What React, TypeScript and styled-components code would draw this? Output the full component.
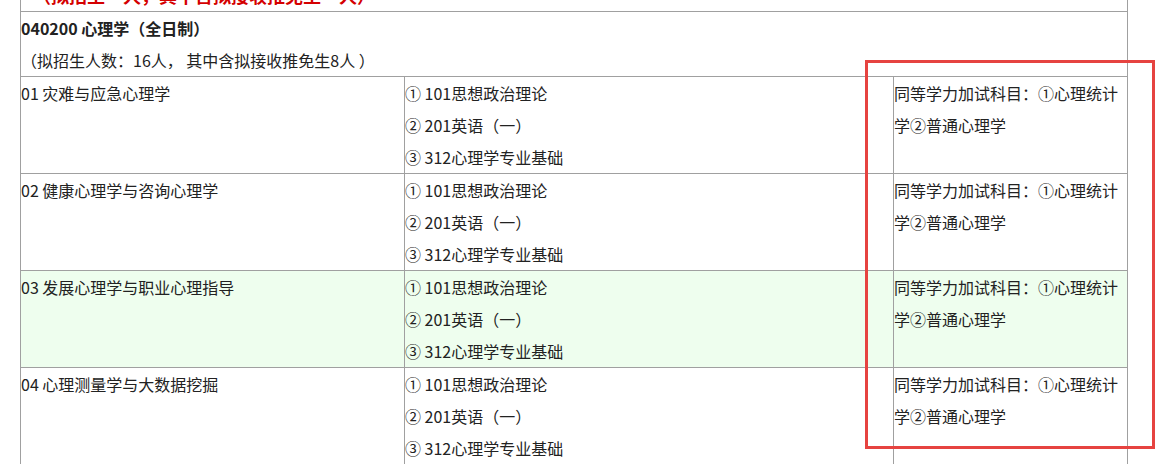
import React from 'react';

import styled, { createGlobalStyle } from 'styled-components';

interface Direction {
  no: string;
  name: string;
  exams: string[];
  extra: string;
  highlight?: boolean;
}

const EXAMS = ['① 101思想政治理论', '② 201英语（一）', '③ 312心理学专业基础'];
const EXTRA = '同等学力加试科目：①心理统计学②普通心理学';

const directions: Direction[] = [
  { no: '01', name: '灾难与应急心理学', exams: EXAMS, extra: EXTRA },
  { no: '02', name: '健康心理学与咨询心理学', exams: EXAMS, extra: EXTRA },
  { no: '03', name: '发展心理学与职业心理指导', exams: EXAMS, extra: EXTRA, highlight: true },
  { no: '04', name: '心理测量学与大数据挖掘', exams: EXAMS, extra: EXTRA },
];

const GlobalStyle = createGlobalStyle`
  html, body {
    margin: 0;
    padding: 0;
    background: #fff;
    overflow: hidden;
  }

  body {
    font-family: 'Noto Sans CJK SC', 'Noto Sans', sans-serif;
    font-size: 16px;
    color: #222;
  }
`;

const Page = styled.div`
  position: relative;
  width: 1174px;
  height: 464px;
  overflow: hidden;
`;

const Table = styled.div`
  display: grid;
  grid-template-columns: 384px 489px 234px;
  width: 1107px;
  margin: -22px 0 0 20px;
  border-left: 1px solid #a0a0a0;
  border-top: 1px solid #a0a0a0;
  line-height: 32px;
`;

const Cell = styled.div<{ $span?: number; $green?: boolean }>`
  grid-column: span ${(p) => p.$span ?? 1};
  min-height: 96px;
  border-right: 1px solid #a0a0a0;
  border-bottom: 1px solid #a0a0a0;
  background: ${(p) => (p.$green ? '#eefeee' : '#fff')};
  white-space: pre-wrap;
  word-break: break-all;
`;

const TitleCell = styled(Cell)`
  min-height: 32px;
  color: #d40000;
  font-weight: 700;
  font-size: 18px;
  padding-left: 12px;
`;

const HeadCell = styled(Cell)`
  min-height: 64px;
`;

const Major = styled.div`
  font-weight: 700;
`;

const Highlight = styled.div`
  position: absolute;
  left: 865px;
  top: 60px;
  width: 284px;
  height: 383px;
  border: 3px solid #e64340;
  pointer-events: none;
`;

export default function App() {
  return (
    <Page>
      <GlobalStyle />
      <Table>
        <TitleCell $span={3}>（拟招生一人，其中含拟接收推免生一人）</TitleCell>
        <HeadCell $span={3}>
          <Major>040200 心理学（全日制）</Major>
          <div>（拟招生人数：16人， 其中含拟接收推免生8人 ）</div>
        </HeadCell>
        {directions.map((d) => (
          <React.Fragment key={d.no}>
            <Cell $green={d.highlight}>{`${d.no} ${d.name}`}</Cell>
            <Cell $green={d.highlight}>
              {d.exams.map((exam) => (
                <div key={exam}>{exam}</div>
              ))}
            </Cell>
            <Cell $green={d.highlight}>{d.extra}</Cell>
          </React.Fragment>
        ))}
      </Table>
      <Highlight />
    </Page>
  );
}
